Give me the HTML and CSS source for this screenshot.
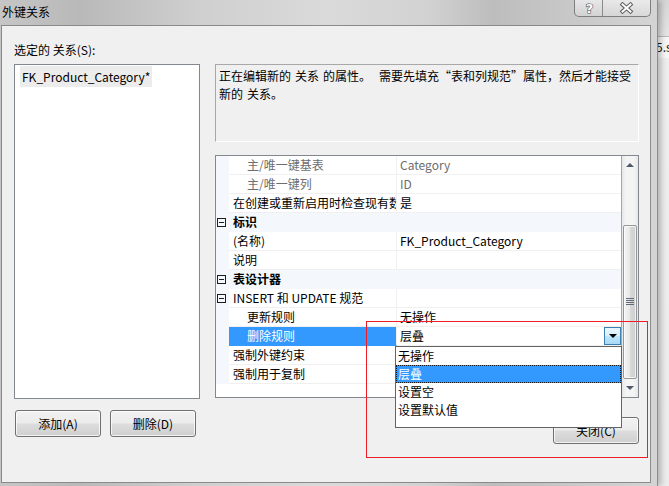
FILE: index.html
```html
<!DOCTYPE html>
<html lang="zh-CN">
<head>
<meta charset="utf-8">
<title>外键关系</title>
<link rel="stylesheet" href="styles.css">
</head>
<body>
<div class="behind">5.s</div>
<div class="window">
  <div class="titlebar">
    <div class="title">外键关系</div>
    <div class="caption">
      <div class="cap cap-help">
        <svg width="29" height="17" viewBox="0 0 29 17"><text x="14.5" y="13" text-anchor="middle" class="qmark">?</text></svg>
      </div>
      <div class="cap cap-close">
        <svg width="47" height="17" viewBox="0 0 47 17">
          <path d="M19.5 4.5 L27.5 11.5 M27.5 4.5 L19.5 11.5" class="x-out"/>
          <path d="M19.5 4.5 L27.5 11.5 M27.5 4.5 L19.5 11.5" class="x-in"/>
        </svg>
      </div>
    </div>
  </div>
  <div class="client">
    <div class="lbl">选定的 关系(S):</div>
    <div class="left">
      <div class="listbox"><span class="item">FK_Product_Category*</span></div>
      <div class="btnrow">
        <button class="btn">添加(A)</button>
        <button class="btn">删除(D)</button>
      </div>
    </div>
    <div class="right">
      <div class="desc">正在编辑新的 关系 的属性。  需要先填充“表和列规范”属性，然后才能接受<br>新的 关系。</div>
      <div class="pgrid">
        <div class="rows">
          <div class="row ro"><div class="m"></div><div class="n ind">主/唯一键基表</div><div class="v">Category</div></div>
          <div class="row ro"><div class="m"></div><div class="n ind">主/唯一键列</div><div class="v">ID</div></div>
          <div class="row"><div class="m"></div><div class="n">在创建或重新启用时检查现有数据</div><div class="v">是</div></div>
          <div class="row cat"><div class="m"><span class="exp"></span></div><div class="catlbl">标识</div></div>
          <div class="row"><div class="m"></div><div class="n">(名称)</div><div class="v">FK_Product_Category</div></div>
          <div class="row"><div class="m"></div><div class="n">说明</div><div class="v"></div></div>
          <div class="row cat"><div class="m"><span class="exp"></span></div><div class="catlbl">表设计器</div></div>
          <div class="row"><div class="m"><span class="exp"></span></div><div class="n">INSERT 和 UPDATE 规范</div><div class="v"></div></div>
          <div class="row"><div class="m"></div><div class="n ind">更新规则</div><div class="v">无操作</div></div>
          <div class="row sel"><div class="m"></div><div class="n ind">删除规则</div><div class="v editv"><span>层叠</span><span class="ddbtn"><span class="tri-down"></span></span></div></div>
          <div class="row"><div class="m"></div><div class="n">强制外键约束</div><div class="v"></div></div>
          <div class="row"><div class="m"></div><div class="n">强制用于复制</div><div class="v"></div></div>
        </div>
        <div class="sb">
          <div class="sb-btn"><span class="arr-up"></span></div>
          <div class="sb-gap"></div>
          <div class="thumb">
            <svg width="8" height="8" viewBox="0 0 8 8" class="grip"><path d="M0 0.5H8M0 2.5H8M0 4.5H8M0 6.5H8" stroke="#5f6a7a" stroke-width="1"/></svg>
          </div>
          <div class="sb-btn"><span class="arr-down"></span></div>
        </div>
        <div class="dropdown">
          <div class="opt">无操作</div>
          <div class="opt opt-sel">层叠</div>
          <div class="opt">设置空</div>
          <div class="opt">设置默认值</div>
        </div>
      </div>
      <button class="btn close-btn">关闭(C)</button>
    </div>
  </div>
</div>
<div class="annot"></div>
</body>
</html>
```
FILE: styles.css
```css
* { box-sizing: border-box; }
html, body { margin: 0; padding: 0; }
body {
  width: 669px;
  height: 486px;
  overflow: hidden;
  position: relative;
  background: linear-gradient(to bottom, #d6d6d6 0, #e2e2e2 30px, #eeeeee 60px, #ececec 100%);
  font-family: "Noto Sans CJK SC", "Noto Sans", sans-serif;
  font-size: 12px;
  color: #000;
}
.behind {
  position: absolute;
  left: 652px;
  top: 36px;
  width: 17px;
  height: 22px;
  border-top: 1px solid #b9b9b9;
  background: #f7f7f7;
  line-height: 20px;
  padding-left: 4px;
  color: #1a1a1a;
  white-space: nowrap;
  overflow: hidden;
}
.window {
  position: relative;
  width: 658px;
  height: 486px;
  border-right: 1px solid #8d8d8d;
  background: linear-gradient(to right, #c6c6c6 0%, #b9b9b9 12%, #cfcfcf 30%, #dadada 50%, #d2d2d2 65%, #bdbdbd 75%, #c9c9c9 88%, #d4d4d4 100%);
  box-shadow: 3px 0 6px rgba(0,0,0,0.25);
  display: flex;
  flex-direction: column;
}
.titlebar {
  height: 25px;
  display: flex;
  justify-content: space-between;
  align-items: flex-start;
}
.title {
  padding-left: 2px;
  line-height: 24px;
  font-size: 12px;
  color: #000;
}
.caption {
  display: flex;
  margin-right: 6px;
  height: 17px;
  border: 1px solid #7e7e7e;
  border-top: none;
  border-radius: 0 0 5px 5px;
  overflow: hidden;
  background: linear-gradient(to bottom, rgba(255,255,255,0.55), rgba(255,255,255,0.15));
}
.cap { height: 16px; }
.cap svg { display: block; }
.cap-help { width: 28px; border-right: 1px solid #8a8a8a; }
.cap-close { width: 47px; }
.qmark {
  font-family: "DejaVu Sans", sans-serif;
  font-size: 13px;
  font-weight: bold;
  fill: #ffffff;
  stroke: #5c5c5c;
  stroke-width: 1.2px;
  paint-order: stroke;
}
.x-out { stroke: #5a5a5a; stroke-width: 4; fill: none; stroke-linecap: square; }
.x-in { stroke: #ffffff; stroke-width: 2; fill: none; stroke-linecap: square; }

.client {
  margin-left: 1px;
  margin-right: 6px;
  height: 458px;
  border: 1px solid #8a8a8a;
  background: #f0f0f0;
  padding: 14px 12px 0 12px;
  display: grid;
  grid-template-columns: 186px 424px;
  grid-template-rows: 20px auto;
  column-gap: 15px;
  row-gap: 4px;
  align-content: start;
}
.lbl {
  grid-column: 1;
  grid-row: 1;
  line-height: 20px;
  white-space: nowrap;
}
.left {
  grid-column: 1;
  grid-row: 2;
  display: flex;
  flex-direction: column;
}
.listbox {
  height: 335px;
  border: 1px solid #828790;
  background: #fff;
  padding: 1px 0 0 5px;
}
.item {
  display: inline-block;
  background: #ececec;
  line-height: 21px;
  padding: 0 2px;
}
.btnrow {
  margin-top: 11px;
  padding-left: 1px;
  display: flex;
  gap: 9px;
}
.btn {
  width: 86px;
  height: 27px;
  border: 1px solid #707070;
  border-radius: 3px;
  background: linear-gradient(to bottom, #f2f2f2 0%, #ebebeb 48%, #dddddd 52%, #cfcfcf 100%);
  box-shadow: inset 0 0 0 1px rgba(255,255,255,0.75);
  font-family: "Noto Sans CJK SC", "Noto Sans", sans-serif;
  font-size: 12px;
  color: #000;
  padding: 0;
  line-height: 24px;
}
.right {
  grid-column: 2;
  grid-row: 2;
  display: flex;
  flex-direction: column;
}
.desc {
  height: 78px;
  border-top: 1px solid #a8a8a8;
  border-left: 1px solid #a8a8a8;
  border-right: 1px solid #ffffff;
  border-bottom: 1px solid #ffffff;
  padding: 2px 3px;
  line-height: 18px;
  word-spacing: 1.3px;
  white-space: pre-wrap;
}
.pgrid {
  position: relative;
  margin-top: 13px;
  height: 243px;
  border: 1px solid #828790;
  background: #fff;
  display: flex;
}
.rows {
  width: 405px;
  display: flex;
  flex-direction: column;
}
.row {
  display: flex;
  height: 19px;
  line-height: 18px;
}
.m {
  width: 13px;
  flex: none;
  background: #f4f7fc;
  display: flex;
  align-items: center;
  padding-left: 1px;
}
.n {
  width: 168px;
  flex: none;
  padding-left: 4px;
  border-right: 1px solid #f0f0f0;
  border-bottom: 1px solid #f0f0f0;
  white-space: nowrap;
  overflow: hidden;
}
.n.ind { padding-left: 18px; }
.v {
  flex: 1;
  padding-left: 3px;
  border-bottom: 1px solid #f0f0f0;
  white-space: nowrap;
  overflow: hidden;
}
.ro .n, .ro .v { color: #6d6d6d; }
.cat .catlbl {
  flex: 1;
  background: #f4f7fc;
  font-weight: bold;
  padding-left: 4px;
}
.exp {
  width: 9px;
  height: 9px;
  border: 1px solid #1e1e1e;
  position: relative;
  display: block;
}
.exp::after {
  content: "";
  position: absolute;
  left: 1px;
  top: 3px;
  width: 5px;
  height: 1px;
  background: #1e1e1e;
}
.sel .n {
  background: #3399ff;
  border-bottom-color: #3399ff;
  color: #fff;
}
.editv {
  display: flex;
  justify-content: space-between;
  padding-right: 0;
}
.ddbtn {
  width: 17px;
  height: 18px;
  border: 1px solid #3c7fb1;
  background: linear-gradient(to bottom, #eaf6fd 0%, #d9f0fc 50%, #bee6fd 52%, #a7d9f5 100%);
  display: flex;
  align-items: center;
  justify-content: center;
}
.tri-down {
  width: 0;
  height: 0;
  border-left: 4px solid transparent;
  border-right: 4px solid transparent;
  border-top: 4px solid #000;
}
.sb {
  width: 17px;
  border-left: 1px solid #a6a6a6;
  background: linear-gradient(to right, #e6e6e6 0%, #f4f4f4 25%, #f4f4f4 75%, #e6e6e6 100%);
  display: flex;
  flex-direction: column;
}
.sb-btn {
  height: 18px;
  display: flex;
  align-items: center;
  justify-content: center;
}
.arr-up {
  width: 0; height: 0;
  border-left: 4px solid transparent;
  border-right: 4px solid transparent;
  border-bottom: 4px solid #4d5a6b;
}
.arr-down {
  width: 0; height: 0;
  border-left: 4px solid transparent;
  border-right: 4px solid transparent;
  border-top: 4px solid #4d5a6b;
}
.sb-gap { height: 51px; }
.thumb {
  height: 154px;
  margin: 0 1px 0 1px;
  border: 1px solid #979797;
  border-radius: 2px;
  background: linear-gradient(to right, #f3f3f3 0%, #e9e9e9 45%, #d6d6d6 55%, #d0d0d0 100%);
  box-shadow: inset 0 0 0 1px rgba(255,255,255,0.7);
  display: flex;
  align-items: center;
  justify-content: center;
}
.grip { display: block; }
.dropdown {
  position: absolute;
  left: 179px;
  top: 190px;
  width: 227px;
  height: 82px;
  border: 1px solid #646464;
  background: #fff;
  z-index: 5;
}
.opt {
  height: 18px;
  line-height: 18px;
  padding-left: 2px;
  white-space: nowrap;
}
.opt-sel {
  background: #3399ff;
  color: #fff;
  outline: 1px dotted #1b1b1b;
  outline-offset: -1px;
}
.close-btn {
  margin-top: 19px;
  align-self: flex-end;
}
.annot {
  position: absolute;
  left: 366px;
  top: 321px;
  width: 282px;
  height: 137px;
  border: 1px solid #ee1c24;
  z-index: 10;
}
```
